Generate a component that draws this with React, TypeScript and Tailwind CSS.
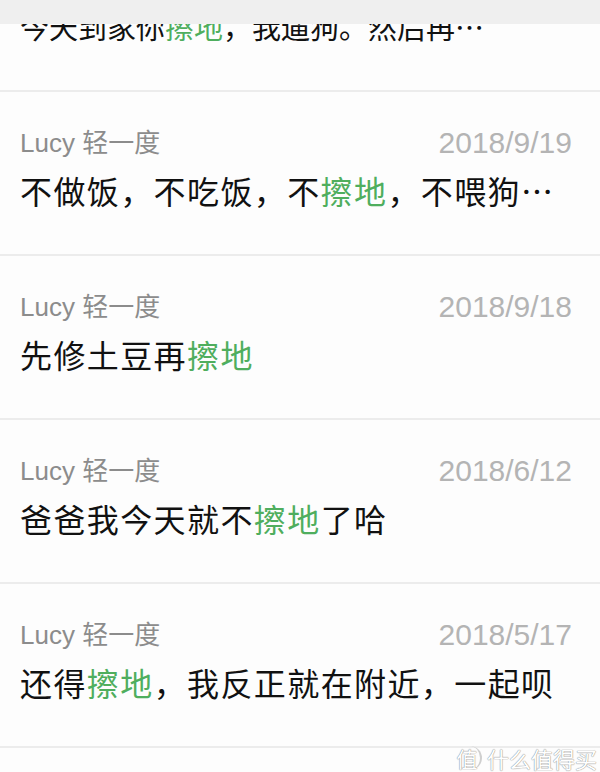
const cjk = "font-['Noto_Sans_CJK_SC','Noto_Sans',sans-serif]";

type Msg = { name: string; date: string; parts: { text: string; hit?: boolean }[] };

const messages: Msg[] = [
  {
    name: "Lucy 轻一度",
    date: "2018/9/19",
    parts: [{ text: "不做饭，不吃饭，不" }, { text: "擦地", hit: true }, { text: "，不喂狗…" }],
  },
  {
    name: "Lucy 轻一度",
    date: "2018/9/18",
    parts: [{ text: "先修土豆再" }, { text: "擦地", hit: true }],
  },
  {
    name: "Lucy 轻一度",
    date: "2018/6/12",
    parts: [{ text: "爸爸我今天就不" }, { text: "擦地", hit: true }, { text: "了哈" }],
  },
  {
    name: "Lucy 轻一度",
    date: "2018/5/17",
    parts: [{ text: "还得" }, { text: "擦地", hit: true }, { text: "，我反正就在附近，一起呗" }],
  },
];

const Row = ({ msg }: { msg: Msg }) => (
  <div className="border-b-2 border-[#ececec] pl-[20px] pr-[28px] pt-[35px] pb-[44px]">
    <div className="flex items-center justify-between h-[32px]">
      <span className="text-[26px] leading-[32px] text-[#8c8c8c] font-['Liberation_Sans','Noto_Sans_CJK_SC',sans-serif]">
        {msg.name}
      </span>
      <span className="text-[30px] leading-[32px] text-[#b4b4b4] font-['Liberation_Sans',sans-serif]">
        {msg.date}
      </span>
    </div>
    <p className={`${cjk} mt-[11px] text-[32px] leading-[40px] tracking-[1.4px] text-[#111] whitespace-nowrap`}>
      {msg.parts.map((p, i) => (
        <span key={i} className={p.hit ? "text-[#4fae5e]" : ""}>
          {p.text}
        </span>
      ))}
    </p>
  </div>
);

export default function App() {
  return (
    <div className="relative w-[600px] h-[772px] overflow-hidden bg-[#fdfdfd]">
      <div className="h-[24px] bg-[#efefef]" />
      <div className="overflow-hidden">
        <div className="border-b-2 border-[#ececec] pl-[20px] pb-[44px] -mt-[18px]">
          <p className={`${cjk} text-[29px] leading-[40px] text-[#111] whitespace-nowrap`}>
            今天到家你<span className="text-[#4fae5e]">擦地</span>，我遛狗。然后再…
          </p>
        </div>
        {messages.map((m, i) => (
          <Row key={i} msg={m} />
        ))}
      </div>
      <div className={`absolute right-[3px] bottom-[2px] flex items-center gap-[5px] ${cjk} text-[22px] leading-[24px] text-white [text-shadow:0_0_1px_#8a8a8a,0_0_1px_#8a8a8a]`}>
        <span className="flex items-center justify-center w-[28px] h-[24px] rounded-r-full border-r-2 border-[#cfcfcf] text-[21px]">值</span>
        <span>什么值得买</span>
      </div>
    </div>
  );
}
